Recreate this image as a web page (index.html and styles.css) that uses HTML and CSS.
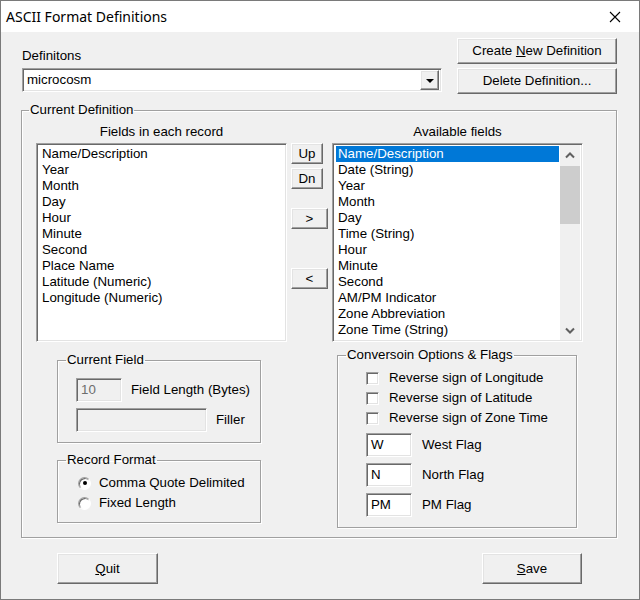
FILE: index.html
```html
<!DOCTYPE html>
<html>
<head>
<meta charset="utf-8">
<link rel="stylesheet" href="styles.css">
</head>
<body>
<div class="window">
  <div class="titlebar">
    <span class="title">ASCII Format Definitions</span>
    <span class="close"><svg width="12" height="12" viewBox="0 0 12 12"><path d="M1 1 L11 11 M11 1 L1 11" stroke="#000" stroke-width="1.1" fill="none"/></svg></span>
  </div>
  <div class="content">
    <div class="top">
      <div class="def-col">
        <div class="label">Definitons</div>
        <div class="combo sunken">
          <span class="combo-text">microcosm</span>
          <span class="combo-btn btn"><span class="tri"></span></span>
        </div>
      </div>
      <div class="btn-col">
        <button class="btn wide"><span>Create <u>N</u>ew Definition</span></button>
        <button class="btn wide"><span>Delete Definition...</span></button>
      </div>
    </div>

    <fieldset class="group main-group">
      <legend class="main-legend">Current Definition</legend>
      <div class="main-body">
        <div class="lists">
          <div class="list-col">
            <div class="caption">Fields in each record</div>
            <div class="listbox sunken">
              <div class="items">
                <div class="item">Name/Description</div>
                <div class="item">Year</div>
                <div class="item">Month</div>
                <div class="item">Day</div>
                <div class="item">Hour</div>
                <div class="item">Minute</div>
                <div class="item">Second</div>
                <div class="item">Place Name</div>
                <div class="item">Latitude (Numeric)</div>
                <div class="item">Longitude (Numeric)</div>
              </div>
            </div>
          </div>
          <div class="mid-col">
            <button class="btn small up"><span>Up</span></button>
            <button class="btn small dn"><span>Dn</span></button>
            <button class="btn arrow right"><span>&gt;</span></button>
            <button class="btn arrow left"><span>&lt;</span></button>
          </div>
          <div class="list-col">
            <div class="caption">Available fields</div>
            <div class="listbox sunken">
              <div class="items">
                <div class="item selected">Name/Description</div>
                <div class="item">Date (String)</div>
                <div class="item">Year</div>
                <div class="item">Month</div>
                <div class="item">Day</div>
                <div class="item">Time (String)</div>
                <div class="item">Hour</div>
                <div class="item">Minute</div>
                <div class="item">Second</div>
                <div class="item">AM/PM Indicator</div>
                <div class="item">Zone Abbreviation</div>
                <div class="item">Zone Time (String)</div>
              </div>
              <div class="scrollbar">
                <div class="sb-arrow"><svg width="10" height="7" viewBox="0 0 10 7"><path d="M1 5.5 L5 1.5 L9 5.5" stroke="#606060" stroke-width="2" fill="none"/></svg></div>
                <div class="sb-track"><div class="sb-thumb"></div></div>
                <div class="sb-arrow"><svg width="10" height="7" viewBox="0 0 10 7"><path d="M1 1.5 L5 5.5 L9 1.5" stroke="#606060" stroke-width="2" fill="none"/></svg></div>
              </div>
            </div>
          </div>
        </div>

        <div class="lower">
          <div class="lower-left">
            <fieldset class="group field-group">
              <legend>Current Field</legend>
              <div class="field-body">
                <div class="frow">
                  <div class="input sunken disabled short">10</div>
                  <span class="flabel">Field Length (Bytes)</span>
                </div>
                <div class="frow">
                  <div class="input sunken disabled long"></div>
                  <span class="flabel">Filler</span>
                </div>
              </div>
            </fieldset>
            <fieldset class="group record-group">
              <legend>Record Format</legend>
              <div class="record-body">
                <div class="rrow"><span class="radio"><span class="dot"></span></span><span>Comma Quote Delimited</span></div>
                <div class="rrow"><span class="radio"></span><span>Fixed Length</span></div>
              </div>
            </fieldset>
          </div>
          <fieldset class="group conv-group">
            <legend>Conversoin Options &amp; Flags</legend>
            <div class="conv-body">
              <div class="crow"><span class="check"></span><span>Reverse sign of Longitude</span></div>
              <div class="crow"><span class="check"></span><span>Reverse sign of Latitude</span></div>
              <div class="crow"><span class="check"></span><span>Reverse sign of Zone Time</span></div>
              <div class="flags">
                <div class="flag-row"><div class="input sunken flag">W</div><span>West Flag</span></div>
                <div class="flag-row"><div class="input sunken flag">N</div><span>North Flag</span></div>
                <div class="flag-row"><div class="input sunken flag">PM</div><span>PM Flag</span></div>
              </div>
            </div>
          </fieldset>
        </div>
      </div>
    </fieldset>

    <div class="bottom">
      <button class="btn big quit"><span><u>Q</u>uit</span></button>
      <button class="btn big save"><span><u>S</u>ave</span></button>
    </div>
  </div>
</div>
</body>
</html>
```

FILE: styles.css
```css
* { box-sizing: border-box; }
html, body { margin: 0; padding: 0; }
body {
  width: 640px;
  height: 600px;
  overflow: hidden;
  background: #f0f0f0;
  font-family: "Liberation Sans", Arial, sans-serif;
  font-size: 13.3px;
  line-height: 16px;
  color: #000;
}
.window {
  width: 640px;
  height: 600px;
  border: 1px solid #7a7a7a;
  display: flex;
  flex-direction: column;
  background: #f0f0f0;
}
.titlebar {
  height: 31px;
  flex: none;
  background: #fff;
  display: flex;
  align-items: center;
  justify-content: space-between;
  padding-left: 5px;
}
.title {
  font-family: "Noto Sans", sans-serif;
  font-size: 14px;
  color: #000;
}
.close {
  width: 46px;
  height: 31px;
  display: flex;
  align-items: center;
  justify-content: center;
  padding-right: 2px;
}
.content {
  flex: 1;
  padding-left: 20px;
}

/* generic controls */
.btn {
  font: inherit;
  color: #000;
  background: #f0f0f0;
  border: 1px solid;
  border-color: #fff #696969 #696969 #fff;
  box-shadow: inset -1px -1px 0 #a0a0a0, inset 1px 1px 0 #e3e3e3;
  padding: 0;
  margin: 0;
  display: flex;
  align-items: center;
  justify-content: center;
  white-space: nowrap;
}
.sunken {
  border: 1px solid;
  border-color: #a0a0a0 #fff #fff #a0a0a0;
  box-shadow: inset 1px 1px 0 #696969, inset -1px -1px 0 #e3e3e3;
  background: #fff;
}

/* top */
.top {
  display: flex;
  padding-top: 6px;
}
.def-col {
  width: 420px;
  margin-left: 1px;
  padding-top: 10px;
}
.label { height: 16px; }
.combo {
  margin-top: 4px;
  height: 24px;
  display: flex;
  align-items: center;
  justify-content: space-between;
  padding: 2px 2px 2px 4px;
}
.combo-btn {
  width: 19px;
  height: 20px;
}
.tri {
  width: 0;
  height: 0;
  border-left: 4px solid transparent;
  border-right: 4px solid transparent;
  border-top: 4px solid #000;
  margin-top: 1px;
}
.btn-col {
  margin-left: 15px;
  display: flex;
  flex-direction: column;
  gap: 4px;
}
.btn.wide {
  width: 160px;
  height: 26px;
}

/* groups */
.group {
  margin: 0;
  padding: 0;
  min-width: 0;
  border: 1px solid #a0a0a0;
  box-shadow: 1px 1px 0 #fff, inset 1px 1px 0 #fff;
}
.group legend {
  padding: 0 1px;
  margin-left: 8px;
  line-height: 16px;
}
.group .main-legend {
  margin-left: 7px;
}
.main-group {
  margin-top: 8px;
  width: 596px;
  height: 436px;
}
.main-body {
  padding-left: 14px;
}
.lists {
  display: flex;
  padding-top: 5px;
}
.list-col {
  width: 251px;
  display: flex;
  flex-direction: column;
}
.caption {
  text-align: center;
  height: 16px;
  margin-bottom: 4px;
  padding-top: 1px;
}
.listbox {
  height: 199px;
  padding: 2px 2px 2px 3px;
  display: flex;
  overflow: hidden;
}
.items {
  flex: 1;
  overflow: hidden;
}
.item {
  height: 16px;
  padding-left: 2px;
  white-space: nowrap;
}
.item.selected {
  background: #0078d7;
  color: #fff;
}
.scrollbar {
  width: 20px;
  display: flex;
  flex-direction: column;
  background: #f0f0f0;
  margin: -1px 0 -1px 1px;
}
.sb-arrow {
  height: 20px;
  display: flex;
  align-items: center;
  justify-content: center;
}
.sb-track {
  flex: 1;
  padding-top: 1px;
}
.sb-thumb {
  height: 58px;
  background: #cdcdcd;
}
.mid-col {
  width: 37px;
  margin: 0 4px;
  display: flex;
  flex-direction: column;
  align-items: flex-start;
  padding-top: 20px;
}
.btn.small {
  width: 32px;
  height: 21px;
}
.btn.dn { margin-top: 4px; }
.btn.arrow {
  width: 37px;
  height: 21px;
}
.btn.right { margin-top: 19px; }
.btn.left { margin-top: 39px; }

/* lower */
.lower {
  display: flex;
  align-items: flex-start;
}
.lower-left {
  margin-left: 21px;
  margin-top: 10px;
  width: 204px;
}
.field-group {
  height: 91px;
}
.field-body {
  padding: 10px 0 0 18px;
}
.frow {
  display: flex;
  align-items: center;
  height: 24px;
  margin-bottom: 6px;
}
.input {
  height: 24px;
  padding: 3px 4px;
  line-height: 16px;
}
.input.disabled {
  background: #f0f0f0;
  color: #6d6d6d;
}
.input.short { width: 46px; }
.input.long { width: 131px; }
.frow .flabel { margin-left: 9px; }
.record-group {
  margin-top: 9px;
  height: 71px;
}
.record-body {
  padding: 5px 0 0 20px;
}
.rrow, .crow {
  display: flex;
  align-items: center;
  height: 20px;
}
.radio {
  width: 13px;
  height: 13px;
  border-radius: 50%;
  border: 1px solid;
  border-color: #a0a0a0 #fff #fff #a0a0a0;
  box-shadow: inset 1px 1px 0 #696969;
  background: #fff;
  display: flex;
  align-items: center;
  justify-content: center;
  margin-right: 8px;
}
.dot {
  width: 4px;
  height: 4px;
  border-radius: 50%;
  background: #000;
}
.conv-group {
  margin-left: 76px;
  margin-top: 5px;
  width: 240px;
  height: 181px;
}
.conv-body {
  padding: 5px 0 0 28px;
}
.check {
  width: 13px;
  height: 13px;
  border: 1px solid;
  border-color: #a0a0a0 #fff #fff #a0a0a0;
  box-shadow: inset 1px 1px 0 #696969, inset -1px -1px 0 #e3e3e3;
  background: #fff;
  margin-right: 10px;
}
.flags {
  margin-top: 5px;
  display: flex;
  flex-direction: column;
  gap: 6px;
}
.flag-row {
  display: flex;
  align-items: center;
}
.input.flag {
  width: 46px;
  margin-right: 10px;
}

/* bottom */
.bottom {
  display: flex;
  margin-top: 15px;
}
.btn.big {
  height: 31px;
}
.btn.quit {
  width: 101px;
  margin-left: 36px;
}
.btn.save {
  width: 100px;
  margin-left: 324px;
}
```
